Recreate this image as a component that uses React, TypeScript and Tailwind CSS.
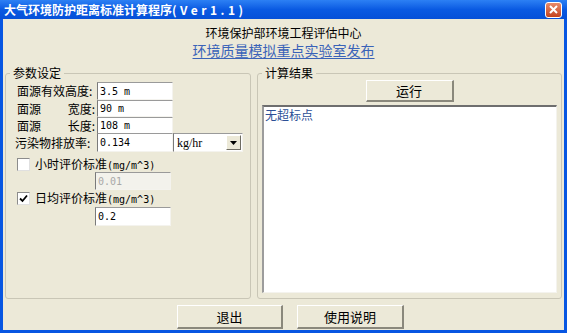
import React from "react";

const cjk = "font-['Noto_Sans_CJK_SC','DejaVu_Sans',sans-serif]";

function Field({ value, w = "w-[76px]", h = "h-[18px]", disabled = false }: { value: string; w?: string; h?: string; disabled?: boolean }) {
  return (
    <div
      className={`${w} ${h} flex items-center pl-[2px] border-t border-l border-t-[#9a9a9a] border-l-[#7a7a7a] border-r border-b border-r-[#f4f3ee] border-b-[#f4f3ee] font-['DejaVu_Sans_Mono',monospace] text-[10px] ${
        disabled ? "bg-[#f3f2ec] text-[#a8a8a8]" : "bg-white text-black"
      }`}
    >
      {value}
    </div>
  );
}

function Check({ checked }: { checked?: boolean }) {
  return (
    <div className="w-[13px] h-[13px] bg-white border-t border-l border-t-[#8c8c8c] border-l-[#8c8c8c] border-r border-b border-r-[#e0e0e0] border-b-[#e0e0e0] flex items-center justify-center">
      {checked && (
        <svg width="9" height="9" viewBox="0 0 9 9">
          <path d="M1 4.5 L3.5 7 L8 1.5" stroke="#000" strokeWidth="1.8" fill="none" />
        </svg>
      )}
    </div>
  );
}

function Btn({ children, w, h }: { children: React.ReactNode; w: string; h: string }) {
  return (
    <div
      className={`${w} ${h} bg-[#ece9d8] border-t border-l border-t-white border-l-white border-r-2 border-b-2 border-r-[#8a887c] border-b-[#8a887c] flex items-center justify-center text-[13px] text-black`}
    >
      {children}
    </div>
  );
}

export default function App() {
  return (
    <div className={`w-[567px] h-[333px] flex flex-col bg-[#0756e2] overflow-hidden ${cjk}`}>
      {/* Title bar */}
      <div className="h-[19px] flex items-center justify-between pl-[4px] pr-[5px] bg-gradient-to-b from-[#2c80f4] via-[#0a5ae2] to-[#0650d8]">
        <div className="text-white font-bold text-[12px] leading-[19px] whitespace-nowrap">
          大气环境防护距离标准计算程序<span className="tracking-[3.5px]">(Ver1.1)</span>
        </div>
        <div className="w-[17px] h-[16px] rounded-[3px] border border-white bg-gradient-to-b from-[#e88a6a] to-[#c4421b] flex items-center justify-center">
          <svg width="9" height="9" viewBox="0 0 9 9">
            <path d="M1 1 L8 8 M8 1 L1 8" stroke="#fff" strokeWidth="2" />
          </svg>
        </div>
      </div>

      {/* Body */}
      <div className="flex-1 mx-[3px] mb-[3px] bg-[#ece9d8] flex flex-col">
        <div className="pt-[6px] flex flex-col items-center">
          <div className="text-[12px] leading-[15px] text-black">环境保护部环境工程评估中心</div>
          <div className="mt-[1px] text-[14px] leading-[18px] text-[#3a63b8] underline underline-offset-2">环境质量模拟重点实验室发布</div>
        </div>

        <div className="mt-[7px] flex gap-[6px] pl-[2px]">
          {/* Left group */}
          <fieldset className="w-[246px] h-[233px] min-w-0 border border-[#c9c6b6] rounded-[3px] px-[4px]">
            <legend className="px-[3px] text-[12px] leading-[14px] text-black">参数设定</legend>
            <div className="pl-[7px] pt-[2px] flex flex-col text-[12px] text-black">
              <div className="flex items-center h-[18px]">
                <div className="w-[80px] leading-[18px]">面源有效高度:</div>
                <Field value="3.5 m" />
              </div>
              <div className="flex items-center h-[17px]">
                <div className="w-[80px] flex justify-between pr-[2px] leading-[17px]">
                  <span>面源</span>
                  <span>宽度:</span>
                </div>
                <Field value="90 m" h="h-[17px]" />
              </div>
              <div className="flex items-center h-[17px]">
                <div className="w-[80px] flex justify-between pr-[2px] leading-[17px]">
                  <span>面源</span>
                  <span>长度:</span>
                </div>
                <Field value="108 m" h="h-[17px]" />
              </div>
              <div className="flex items-center h-[19px] mt-[-1px] ml-[-2px]">
                <div className="w-[82px] leading-[19px]">污染物排放率:</div>
                <Field value="0.134" h="h-[19px]" />
                <div className="w-[70px] h-[19px] bg-white border-t border-l border-t-[#9a9a9a] border-l-[#7a7a7a] border-r border-b border-r-[#f4f3ee] border-b-[#f4f3ee] flex items-center justify-between pl-[3px] pr-[1px]">
                  <span className="font-['Liberation_Serif',serif] text-[12px]">kg/hr</span>
                  <div className="w-[15px] h-[15px] bg-[#ece9d8] border-t border-l border-t-white border-l-white border-r border-b border-r-[#6f6d63] border-b-[#6f6d63] flex items-center justify-center">
                    <svg width="7" height="4" viewBox="0 0 7 4">
                      <path d="M0 0 L7 0 L3.5 4 Z" fill="#000" />
                    </svg>
                  </div>
                </div>
              </div>

              <div className="flex items-center h-[13px] mt-[6px] gap-[5px]">
                <Check />
                <span className="leading-[13px]">
                  小时评价标准<span className="font-['DejaVu_Sans_Mono',monospace] text-[10px]">(mg/m^3)</span>
                </span>
              </div>
              <div className="ml-[78px] mt-[1px]">
                <Field value="0.01" h="h-[18px]" disabled />
              </div>
              <div className="flex items-center h-[13px] mt-[2px] gap-[5px]">
                <Check checked />
                <span className="leading-[13px]">
                  日均评价标准<span className="font-['DejaVu_Sans_Mono',monospace] text-[10px]">(mg/m^3)</span>
                </span>
              </div>
              <div className="ml-[78px] mt-[2px]">
                <Field value="0.2" h="h-[19px]" />
              </div>
            </div>
          </fieldset>

          {/* Right group */}
          <fieldset className="w-[305px] h-[233px] min-w-0 border border-[#c9c6b6] rounded-[3px] px-[4px]">
            <legend className="px-[3px] text-[12px] leading-[14px] text-black">计算结果</legend>
            <div className="flex flex-col items-center">
              <Btn w="w-[88px]" h="h-[22px]">运行</Btn>
              <div className="mt-[3px] w-full h-[188px] bg-white border-t-2 border-l-2 border-t-[#6e6e6e] border-l-[#9c9c9c] border-r border-b border-r-[#f4f3ee] border-b-[#f4f3ee] px-[1px] text-[12px] leading-[15px] text-[#2c4f96]">
                无超标点
              </div>
            </div>
          </fieldset>
        </div>

        <div className="mt-[6px] flex pl-[174px] gap-[14px]">
          <Btn w="w-[106px]" h="h-[24px]">退出</Btn>
          <Btn w="w-[107px]" h="h-[24px]">使用说明</Btn>
        </div>
      </div>
    </div>
  );
}
